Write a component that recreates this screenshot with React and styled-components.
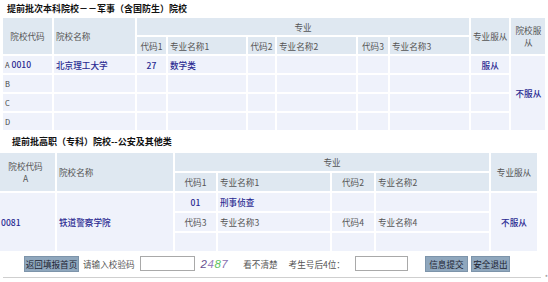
import styled, { createGlobalStyle } from "styled-components";

const GlobalStyle = createGlobalStyle`
    html, body {
        margin: 0;
        padding: 0;
        background: #ffffff;
    }
    body {
        font-family: "Noto Sans CJK SC", "Noto Sans", sans-serif;
        font-size: 8.6px;
        color: #555555;
        overflow: hidden;
    }
`

const tabela1 = [
    { letra: "A", codigo: "0010", escola: "北京理工大学", cod1: "27", nome1: "数学类", servir: "服从" },
    { letra: "B" },
    { letra: "C" },
    { letra: "D" },
];

export default function App(){
    return (
        <Pagina>
            <GlobalStyle />
            <Titulo $indent={7} $h={16}>提前批次本科院校－－军事（含国防生）院校</Titulo>

            <Tabela $ml={1} $h={17}>
                <colgroup>
                    <col width="49" />
                    <col width="81" />
                    <col width="29" />
                    <col width="78" />
                    <col width="27" />
                    <col width="79" />
                    <col width="30" />
                    <col width="79" />
                    <col width="33" />
                    <col width="34" />
                </colgroup>
                <tbody>
                    <tr>
                        <Th rowSpan={2} $align="center">院校代码</Th>
                        <Th rowSpan={2}>院校名称</Th>
                        <Th colSpan={6} $align="center">专业</Th>
                        <Th rowSpan={2} $align="center">专业服从</Th>
                        <Th rowSpan={2} $align="center">院校服<br />从</Th>
                    </tr>
                    <tr>
                        <Th $align="center">代码1</Th>
                        <Th>专业名称1</Th>
                        <Th $align="center">代码2</Th>
                        <Th>专业名称2</Th>
                        <Th $align="center">代码3</Th>
                        <Th>专业名称3</Th>
                    </tr>
                    {tabela1.map((linha, i) => (
                        <tr key={linha.letra}>
                            <Td>
                                <Letra>{linha.letra}</Letra>
                                {linha.codigo && <Link> {linha.codigo}</Link>}
                            </Td>
                            <Td><Link>{linha.escola}</Link></Td>
                            <Td $align="center"><Link>{linha.cod1}</Link></Td>
                            <Td><Link>{linha.nome1}</Link></Td>
                            <Td />
                            <Td />
                            <Td />
                            <Td />
                            <Td $align="center"><Link>{linha.servir}</Link></Td>
                            {i === 0 && <Td rowSpan={4} $align="center"><Link>不服从</Link></Td>}
                        </tr>
                    ))}
                </tbody>
            </Tabela>

            <Titulo $indent={12} $h={19}>提前批高职（专科）院校--公安及其他类</Titulo>

            <Tabela $ml={-6} $h={18}>
                <colgroup>
                    <col width="59" />
                    <col width="116" />
                    <col width="41" />
                    <col width="112" />
                    <col width="42" />
                    <col width="113" />
                    <col width="46" />
                </colgroup>
                <tbody>
                    <tr>
                        <Th rowSpan={2} $align="center">院校代码<br />A</Th>
                        <Th rowSpan={2}>院校名称</Th>
                        <Th colSpan={4} $align="center">专业</Th>
                        <Th rowSpan={2} $align="center">专业服从</Th>
                    </tr>
                    <tr>
                        <Th $align="center">代码1</Th>
                        <Th>专业名称1</Th>
                        <Th $align="center">代码2</Th>
                        <Th>专业名称2</Th>
                    </tr>
                    <tr>
                        <Td rowSpan={3} $pl={5}><Link>0081</Link></Td>
                        <Td rowSpan={3}><Link>铁道警察学院</Link></Td>
                        <Td $align="center"><Link>01</Link></Td>
                        <Td><Link>刑事侦查</Link></Td>
                        <Td />
                        <Td />
                        <Td rowSpan={3} $align="center"><Link>不服从</Link></Td>
                    </tr>
                    <tr>
                        <Td $align="center">代码3</Td>
                        <Td>专业名称3</Td>
                        <Td $align="center">代码4</Td>
                        <Td>专业名称4</Td>
                    </tr>
                    <tr>
                        <Td />
                        <Td />
                        <Td />
                        <Td />
                    </tr>
                </tbody>
            </Tabela>

            <Rodape>
                <Botao $w={55} $ml={24}>返回填报首页</Botao>
                <Texto $ml={4}>请输入校验码</Texto>
                <Campo $w={55} $ml={5} />
                <Codigo>
                    <Digito $cor="#6a4f90">2</Digito>
                    <Digito $cor="#9a7fc0">4</Digito>
                    <Digito $cor="#5cc25e">8</Digito>
                    <Digito $cor="#8a6fb0">7</Digito>
                </Codigo>
                <Texto $ml={15}>看不清楚</Texto>
                <Texto $ml={11}>考生号后4位：</Texto>
                <Campo $w={53} $ml={10} />
                <Botao $w={43} $ml={17}>信息提交</Botao>
                <Botao $w={39} $ml={3}>安全退出</Botao>
            </Rodape>

            <Linha>
                <Traco />
                <Marca>*</Marca>
            </Linha>
        </Pagina>
    );
}

const Pagina = styled.div`
    width: 548px;
    height: 282px;
`

const Titulo = styled.div`
    height: ${props => props.$h}px;
    line-height: ${props => props.$h + 1}px;
    padding-left: ${props => props.$indent}px;

    font-size: 9px;
    font-weight: 700;
    color: #111111;
    white-space: nowrap;
`

const Tabela = styled.table`
    margin-left: ${props => props.$ml}px;
    border-collapse: separate;
    border-spacing: 2px;
    table-layout: fixed;

    th, td {
        height: ${props => props.$h}px;
    }
`

const Th = styled.th`
    padding: 0 2px;
    background: #dfe8f1;
    font-weight: 400;
    font-size: 8.6px;
    line-height: 12px;
    color: #555555;
    text-align: ${props => props.$align || "left"};
    vertical-align: middle;
    white-space: nowrap;
    overflow: hidden;
`

const Td = styled.td`
    padding: 0 2px 0 ${props => props.$pl ?? 2}px;
    background: #eff2fb;
    font-size: 8.6px;
    line-height: 12px;
    color: #555555;
    text-align: ${props => props.$align || "left"};
    vertical-align: middle;
    white-space: nowrap;
    overflow: hidden;
`

const Letra = styled.span`
    color: #444444;
    font-size: 7.5px;
`

const Link = styled.span`
    color: #2b2b92;
    font-weight: 500;
`

const Rodape = styled.div`
    display: flex;
    align-items: center;
    height: 21px;
    white-space: nowrap;
`

const Botao = styled.button`
    width: ${props => props.$w}px;
    height: 16px;
    margin-left: ${props => props.$ml}px;
    padding: 0;

    background: #8fa7bd;
    border: 1px solid #7d94aa;
    border-radius: 0;

    font-family: "Noto Sans CJK SC", sans-serif;
    font-size: 8.6px;
    line-height: 14px;
    color: #1d2433;
`

const Texto = styled.span`
    margin-left: ${props => props.$ml}px;
    font-size: 8.6px;
    color: #555555;
`

const Campo = styled.div`
    width: ${props => props.$w}px;
    height: 15px;
    margin-left: ${props => props.$ml}px;
    box-sizing: border-box;

    background: #ffffff;
    border: 1px solid #a9a9a9;
`

const Codigo = styled.span`
    margin-left: 6px;
    font-family: "Liberation Sans", Arial, sans-serif;
    font-style: italic;
    font-size: 11.5px;
    letter-spacing: 0.5px;
`

const Digito = styled.span`
    color: ${props => props.$cor};
`

const Linha = styled.div`
    display: flex;
    align-items: center;
    height: 6px;
`

const Traco = styled.div`
    width: 538px;
    margin-left: 3px;
    border-top: 1px solid #cfcfcf;
`

const Marca = styled.span`
    margin-left: 4px;
    font-size: 7px;
    color: #888888;
`
